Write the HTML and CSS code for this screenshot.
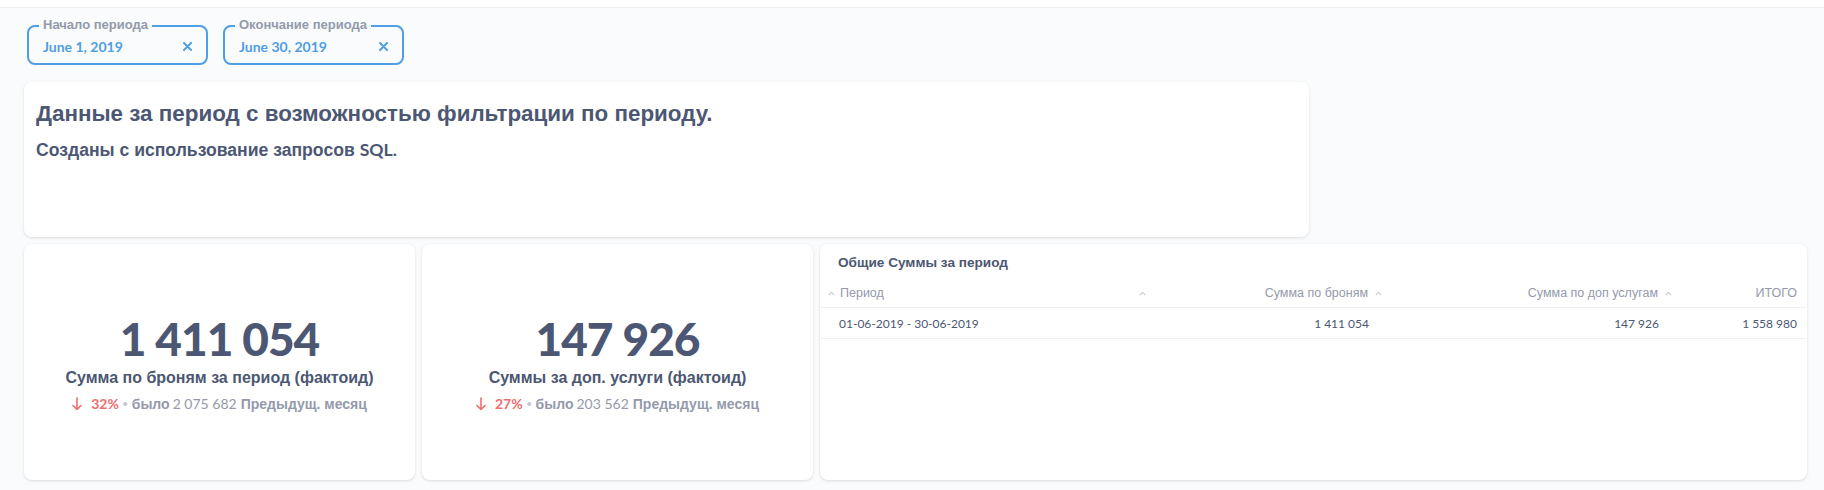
FILE: index.html
```html
<!DOCTYPE html>
<html lang="ru">
<head>
<meta charset="utf-8">
<title>Dashboard</title>
<link rel="stylesheet" href="styles.css">
</head>
<body>
<div class="topbar"></div>
<div class="filters">
  <div class="filter">
    <span class="flabel">Начало периода</span>
    <span class="fvalue">June 1, 2019</span>
    <svg class="fclear" width="9" height="9" viewBox="0 0 9 9"><path d="M1 1L8 8M8 1L1 8" stroke="#509ee3" stroke-width="2" stroke-linecap="round"/></svg>
  </div>
  <div class="filter">
    <span class="flabel">Окончание периода</span>
    <span class="fvalue">June 30, 2019</span>
    <svg class="fclear" width="9" height="9" viewBox="0 0 9 9"><path d="M1 1L8 8M8 1L1 8" stroke="#509ee3" stroke-width="2" stroke-linecap="round"/></svg>
  </div>
</div>
<div class="grid">
  <div class="card textcard">
    <h2 class="tc-title">Данные за период с возможностью фильтрации по периоду.</h2>
    <p class="tc-sub">Созданы с использование запросов <span class="lat">SQL.</span></p>
  </div>
  <div class="row">
    <div class="card scalar">
      <div class="sv">1 411 054</div>
      <div class="sl">Сумма по броням за период (фактоид)</div>
      <div class="sc">
        <svg class="arrow" width="10" height="14" viewBox="0 0 10 14"><path d="M5 1V12.5M1 8.5L5 12.5L9 8.5" fill="none" stroke="#ed6e6e" stroke-width="1.6" stroke-linecap="round" stroke-linejoin="round"/></svg>
        <span class="pct lat">32%</span>
        <span class="dot">•</span>
        <span class="was">было</span>
        <span class="wasv lat">2 075 682</span>
        <span class="prev">Предыдущ. месяц</span>
      </div>
    </div>
    <div class="card scalar">
      <div class="sv">147 926</div>
      <div class="sl">Суммы за доп. услуги (фактоид)</div>
      <div class="sc">
        <svg class="arrow" width="10" height="14" viewBox="0 0 10 14"><path d="M5 1V12.5M1 8.5L5 12.5L9 8.5" fill="none" stroke="#ed6e6e" stroke-width="1.6" stroke-linecap="round" stroke-linejoin="round"/></svg>
        <span class="pct lat">27%</span>
        <span class="dot">•</span>
        <span class="was">было</span>
        <span class="wasv lat">203 562</span>
        <span class="prev">Предыдущ. месяц</span>
      </div>
    </div>
    <div class="card tablecard">
      <div class="tt">Общие Суммы за период</div>
      <div class="trow thead">
        <div class="c c1"><svg class="caret" width="7" height="5" viewBox="0 0 7 5"><path d="M0.8 4.2L3.5 1.3L6.2 4.2" fill="none" stroke="#c9cdd5" stroke-width="1.2"/></svg><span>Период</span></div>
        <div class="c c2"><svg class="caret" width="7" height="5" viewBox="0 0 7 5"><path d="M0.8 4.2L3.5 1.3L6.2 4.2" fill="none" stroke="#c9cdd5" stroke-width="1.2"/></svg><span class="push">Сумма по броням</span><svg class="caret" width="7" height="5" viewBox="0 0 7 5"><path d="M0.8 4.2L3.5 1.3L6.2 4.2" fill="none" stroke="#c9cdd5" stroke-width="1.2"/></svg></div>
        <div class="c c3"><span class="push">Сумма по доп услугам</span><svg class="caret" width="7" height="5" viewBox="0 0 7 5"><path d="M0.8 4.2L3.5 1.3L6.2 4.2" fill="none" stroke="#c9cdd5" stroke-width="1.2"/></svg></div>
        <div class="c c4"><span class="push">ИТОГО</span></div>
      </div>
      <div class="trow tdata">
        <div class="c c1 lat">01-06-2019 - 30-06-2019</div>
        <div class="c c2 lat">1 411 054</div>
        <div class="c c3 lat">147 926</div>
        <div class="c c4 lat">1 558 980</div>
      </div>
    </div>
  </div>
</div>
</body>
</html>
```
FILE: styles.css
```css
* { box-sizing: border-box; }
html, body { margin: 0; padding: 0; }
body {
  background: #f9fbfc;
  font-family: "Liberation Sans", Arial, sans-serif;
  color: #4c5773;
  width: 1824px;
  height: 490px;
  overflow: hidden;
}
.lat { font-family: Lato, "Liberation Sans", sans-serif; }

.topbar {
  height: 8px;
  background: #fff;
  border-bottom: 1px solid #eceef1;
}

.filters {
  display: flex;
  gap: 15px;
  padding: 17px 0 0 27px;
}
.filter {
  position: relative;
  width: 181px;
  height: 40px;
  border: 2px solid #509ee3;
  border-radius: 8px;
  display: flex;
  align-items: center;
  padding: 2px 14px 0 14px;
}
.flabel {
  position: absolute;
  left: 10px;
  top: -10px;
  padding: 0 4px;
  background: #f9fbfc;
  font-size: 13px;
  line-height: 16px;
  font-weight: 700;
  color: #949aab;
}
.fvalue {
  font-family: Lato, sans-serif;
  font-weight: 700;
  font-size: 14px;
  color: #509ee3;
}
.fclear { margin-left: auto; }

.grid {
  padding: 17px 0 0 24px;
}
.card {
  background: #fff;
  border-radius: 8px;
  box-shadow: 0 1px 3px rgba(0, 0, 0, 0.13);
}
.textcard {
  width: 1285px;
  height: 155px;
  padding: 19px 12px 0 12px;
}
.tc-title {
  margin: 0;
  font-size: 22.4px;
  line-height: 26px;
  font-weight: 700;
}
.tc-sub {
  margin: 13px 0 0 0;
  font-size: 17.6px;
  line-height: 20px;
  font-weight: 700;
}

.row {
  display: flex;
  gap: 7px;
  margin-top: 7px;
}
.scalar {
  width: 391px;
  height: 236px;
  display: flex;
  flex-direction: column;
  align-items: center;
  justify-content: center;
  padding-top: 5px;
}
.sv {
  font-family: Lato, sans-serif;
  font-weight: 900;
  font-size: 46px;
  line-height: 46px;
  letter-spacing: -1px;
}
.sl {
  margin-top: 6px;
  font-size: 16px;
  line-height: 20px;
  font-weight: 700;
}
.sc {
  margin-top: 7px;
  display: flex;
  align-items: center;
  font-size: 14px;
  line-height: 18px;
  color: #949aab;
}
.arrow { margin-right: 9px; }
.pct { color: #ed6e6e; font-weight: 700; }
.dot { margin: 0 4px; color: #c3c7d0; font-size: 14px; }
.was { font-weight: 700; margin-right: 3px; }
.wasv { margin-right: 4px; }
.prev { font-weight: 700; }

.tablecard {
  width: 987px;
  height: 236px;
  padding-top: 10px;
}
.tt {
  padding-left: 18px;
  font-size: 13.6px;
  line-height: 18px;
  font-weight: 700;
}
.trow {
  display: flex;
  margin: 0 1px;
  border-bottom: 1px solid #f0f0f0;
}
.thead {
  margin-top: 7px;
  height: 29px;
  font-size: 12.5px;
  color: #949aab;
}
.tdata {
  height: 31px;
  font-size: 12px;
  font-weight: 400;
  color: #4c5773;
}
.c { display: flex; align-items: center; }
.c1 { width: 314px; }
.c2 { width: 250px; }
.c3 { width: 296px; }
.c4 { width: 125px; }
.thead .c1 { padding-left: 7px; }
.thead .c1 .caret { margin-right: 5px; }
.thead .c2 { padding-left: 4px; padding-right: 3px; }
.thead .c2 .caret + .push { margin-left: auto; }
.thead .c2 .push + .caret { margin-left: 7px; }
.thead .c3 { justify-content: flex-end; padding-right: 9px; }
.thead .c3 .caret { margin-left: 7px; }
.thead .c4 { justify-content: flex-end; padding-right: 9px; }
.tdata .c1 { padding-left: 18px; }
.tdata .c2 { justify-content: flex-end; padding-right: 16px; }
.tdata .c3 { justify-content: flex-end; padding-right: 22px; }
.tdata .c4 { justify-content: flex-end; padding-right: 9px; }
.caret { flex: none; }
```
